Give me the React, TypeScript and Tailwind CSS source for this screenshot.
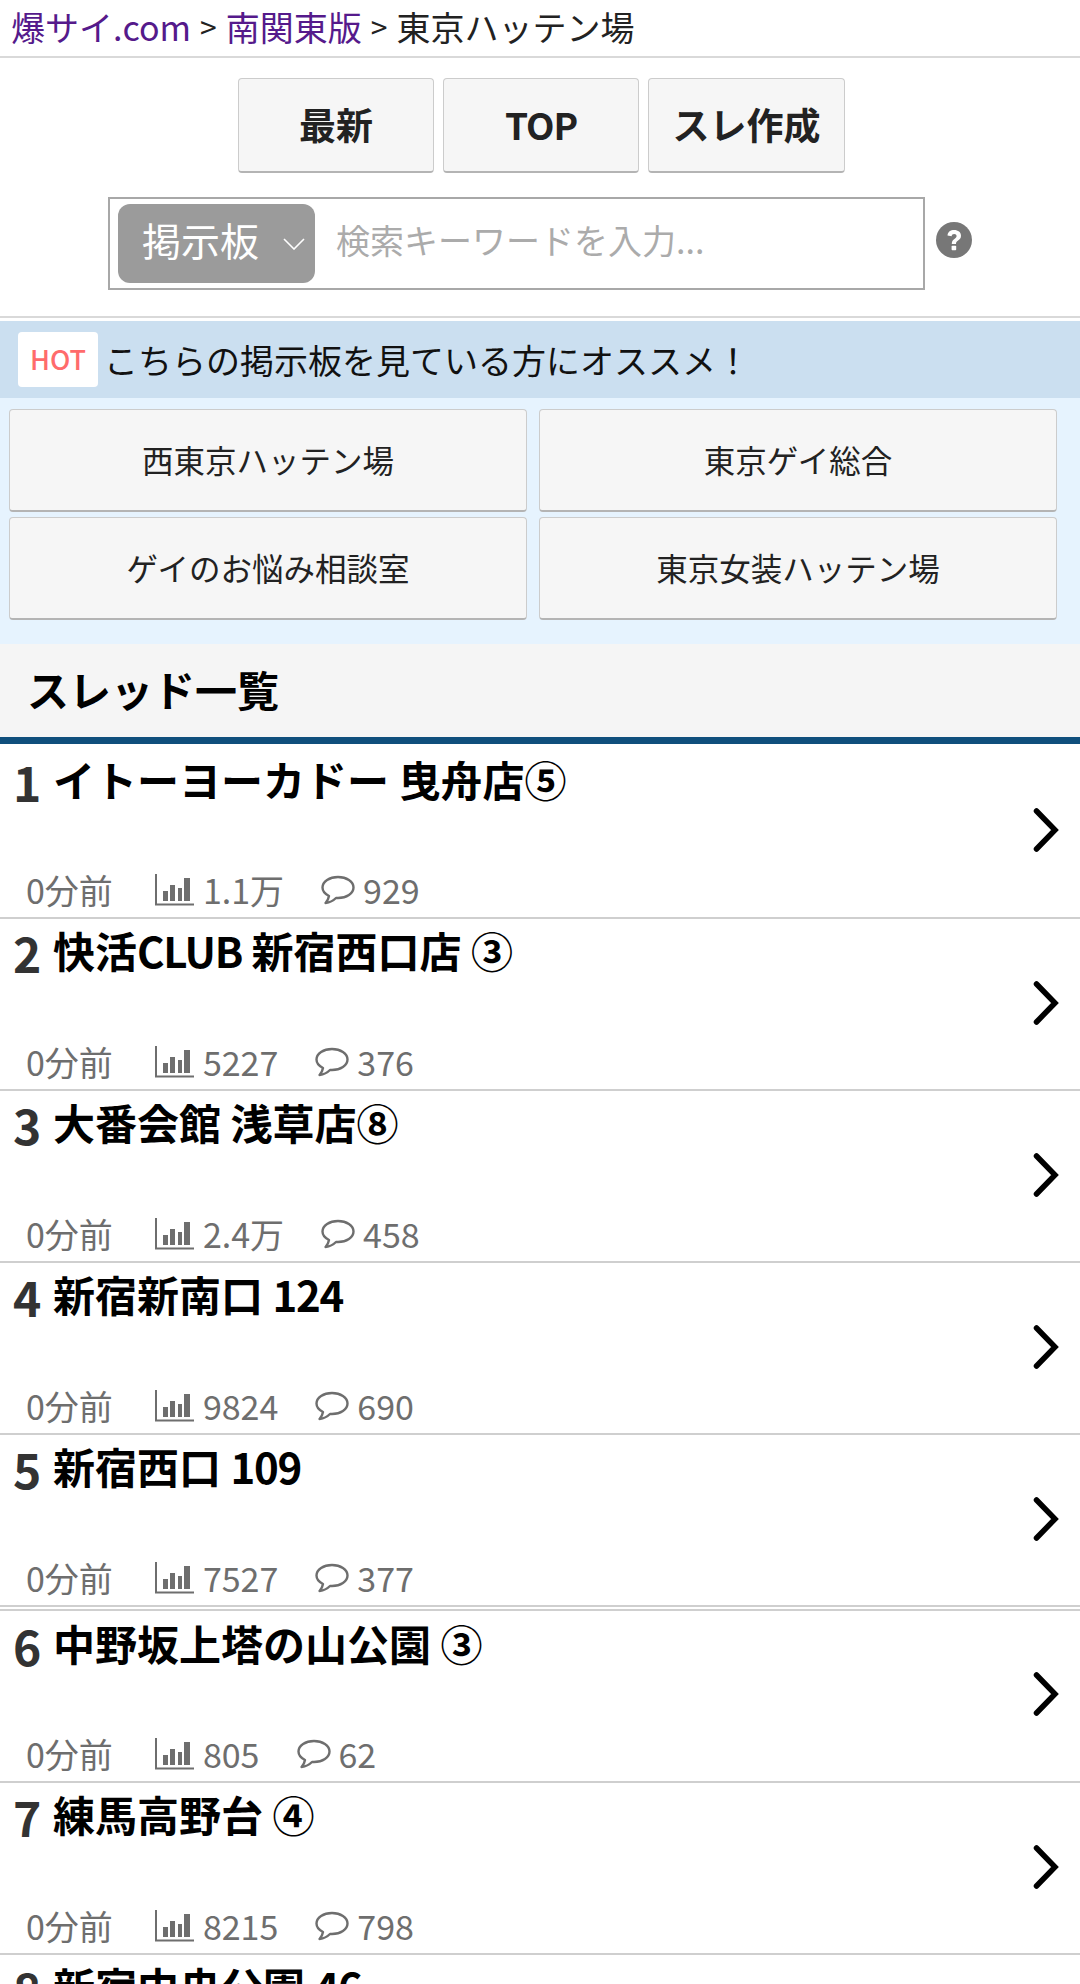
const threads = [
  { n: 1, title: "イトーヨーカドー 曳舟店⑤", views: "1.1万", res: "929", box: "h-[174px]", pt: "pt-[4px]", chev: "top-[62px]" },
  { n: 2, title: "快活CLUB 新宿西口店 ③", views: "5227", res: "376", box: "h-[172px]", pt: "pt-[1px]", chev: "top-[61px]" },
  { n: 3, title: "大番会館 浅草店⑧", views: "2.4万", res: "458", box: "h-[172px]", pt: "pt-[1px]", chev: "top-[61px]" },
  { n: 4, title: "新宿新南口 124", views: "9824", res: "690", box: "h-[172px]", pt: "pt-[1px]", chev: "top-[61px]" },
  { n: 5, title: "新宿西口 109", views: "7527", res: "377", box: "h-[172px]", pt: "pt-[1px]", chev: "top-[61px]" },
  { n: 6, title: "中野坂上塔の山公園 ③", views: "805", res: "62", box: "h-[174px] mt-[2px] border-t-2 border-t-[#cfcfcf]", pt: "pt-[2px]", chev: "top-[60px]" },
  { n: 7, title: "練馬高野台 ④", views: "8215", res: "798", box: "h-[172px]", pt: "pt-[1px]", chev: "top-[61px]" },
  { n: 8, title: "新宿中央公園 46", views: "", res: "", box: "h-[172px]", pt: "pt-[1px]", chev: "top-[61px]" },
];

function Bars() {
  return (
    <svg width="39" height="32" viewBox="0 0 39 32" className="shrink-0 mt-[2px]">
      <path d="M1 0V30.500H39" fill="none" stroke="#6e6e6e" strokeWidth="2" />
      <rect x="8" y="17" width="5" height="10" fill="#6e6e6e" />
      <rect x="15" y="11" width="5" height="16" fill="#6e6e6e" />
      <rect x="23" y="14" width="4" height="13" fill="#6e6e6e" />
      <rect x="29" y="4" width="6" height="23" fill="#6e6e6e" />
    </svg>
  );
}

function Bubble() {
  return (
    <svg width="34" height="30" viewBox="0 0 34 30" className="shrink-0 mt-[2px]">
      <path
        d="M17 2C8.500 2 1.500 6.500 1.500 12.500C1.500 16 4 19 8 21C7.500 24 6 26.500 4.500 28C8.500 27.500 12.500 25.500 15 23C15.700 23 16.300 23 17 23C25.500 23 32.500 18.500 32.500 12.500C32.500 6.500 25.500 2 17 2Z"
        fill="none"
        stroke="#6e6e6e"
        strokeWidth="2.400"
        strokeLinejoin="round"
      />
    </svg>
  );
}

function Title({ text }: { text: string }) {
  const parts = text.split(/([0-9A-Z]+)/);
  return (
    <span className="text-[42px] leading-[60px] font-bold text-black whitespace-nowrap">
      {parts.map((p, i) =>
        i % 2 === 1 ? (
          <span key={i} className="tracking-[-1.300px]">
            {p}
          </span>
        ) : (
          <span key={i}>{p}</span>
        ),
      )}
    </span>
  );
}

function Row({ t }: { t: (typeof threads)[number] }) {
  return (
    <div className={`relative ${t.box} shrink-0 border-b-2 border-b-[#cfcfcf]`}>
      <div className={`flex items-start pl-[13px] ${t.pt}`}>
        <span className="w-[40px] shrink-0 text-[48px] leading-[64px] font-bold text-[#333333] tracking-[-1px]">
          {t.n}
        </span>
        <Title text={t.title} />
      </div>
      {t.views && (
        <div className="absolute left-[26px] bottom-[3px] flex items-center h-[50px] text-[34px] text-[#6e6e6e]">
          <span>0分前</span>
          <span className="ml-[42px] flex items-center gap-[9px]">
            <Bars />
            {t.views}
          </span>
          <span className="ml-[37px] flex items-center gap-[8px]">
            <Bubble />
            {t.res}
          </span>
        </div>
      )}
      <svg width="28" height="46" viewBox="0 0 28 46" className={`absolute right-[19px] ${t.chev}`}>
        <path d="M3.500 4L22 23L3.500 42" fill="none" stroke="#000" strokeWidth="5.500" strokeLinecap="round" strokeLinejoin="miter" />
      </svg>
    </div>
  );
}

function GrayButton({ label, className }: { label: string; className: string }) {
  return (
    <div
      className={`flex items-center justify-center bg-[#f6f6f6] border border-[#cccccc] border-b-2 border-b-[#b4b4b4] rounded-[4px] text-[#222222] ${className}`}
    >
      {label}
    </div>
  );
}

export default function App() {
  return (
    <div className="w-[1080px] h-[1984px] overflow-hidden bg-white flex flex-col font-['Noto_Sans_CJK_JP','Noto_Sans',sans-serif]">
      <div className="h-[58px] shrink-0 border-b-2 border-[#d9d9d9] flex items-center pl-[11px] pb-[3px] text-[34px] text-[#222222] whitespace-nowrap">
        <span className="text-[#551a8b]">爆サイ.com</span>
        <span className="mx-[9px] text-[30px]">&gt;</span>
        <span className="text-[#551a8b]">南関東版</span>
        <span className="mx-[9px] text-[30px]">&gt;</span>
        <span>東京ハッテン場</span>
      </div>

      <div className="h-[260px] shrink-0 border-b-2 border-[#d9d9d9] flex flex-col">
        <div className="mt-[20px] flex justify-start pl-[238px] gap-[9px] font-bold text-[37px]">
          <GrayButton label="最新" className="w-[196px] h-[95px]" />
          <GrayButton label="TOP" className="w-[196px] h-[95px] tracking-[-1px]" />
          <GrayButton label="スレ作成" className="w-[197px] h-[95px]" />
        </div>
        <div className="mt-[24px] ml-[108px] flex items-center">
          <div className="w-[817px] h-[93px] border-2 border-[#a8a8a8] flex items-center pl-[8px]">
            <div className="relative w-[197px] h-[79px] rounded-[12px] bg-[#9b9b9b] flex items-center pl-[24px] pb-[8px] text-[39px] text-white">
              掲示板
              <svg width="22" height="12" viewBox="0 0 22 12" className="absolute right-[10px] top-[34px]">
                <path d="M1 1L11 11L21 1" fill="none" stroke="#fff" strokeWidth="1.600" />
              </svg>
            </div>
            <span className="ml-[21px] pb-[8px] text-[34px] text-[#ababab]">検索キーワードを入力...</span>
          </div>
          <svg width="38" height="38" viewBox="0 0 38 38" className="ml-[10px] mb-[8px]">
            <circle cx="19" cy="19" r="18" fill="#777777" />
            <path d="M12.500 14.500C12.800 10.800 15.500 9 19.200 9C23 9 26 11.200 26 14.700C26 17.300 24.600 18.500 22.800 19.700C21.300 20.700 21 21.300 21 23H16.800C16.800 20.400 17.500 19.200 19.400 17.900C20.800 17 21.600 16.300 21.600 15C21.600 13.600 20.600 12.900 19.200 12.900C17.700 12.900 16.800 13.800 16.600 15.200Z" fill="#fff" />
            <rect x="16.600" y="24.800" width="4.600" height="4.400" rx="0.800" fill="#fff" />
          </svg>
        </div>
      </div>

      <div className="h-[3px] shrink-0 bg-white" />
      <div className="h-[77px] shrink-0 bg-[#cbdff0] flex items-center pl-[18px]">
        <div className="w-[80px] h-[55px] bg-white rounded-[4px] flex items-center justify-center text-[27px] font-medium text-[#ff6b6b]">
          HOT
        </div>
        <span className="ml-[6px] text-[34px] text-[#111111]">こちらの掲示板を見ている方にオススメ！</span>
      </div>
      <div className="h-[246px] shrink-0 bg-[#e6f3fe] px-[9px] pt-[11px]">
        <div className="grid grid-cols-[518px_518px] gap-x-[12px] gap-y-[5px] text-[31.500px]">
          <GrayButton label="西東京ハッテン場" className="h-[103px]" />
          <GrayButton label="東京ゲイ総合" className="h-[103px]" />
          <GrayButton label="ゲイのお悩み相談室" className="h-[103px]" />
          <GrayButton label="東京女装ハッテン場" className="h-[103px]" />
        </div>
      </div>

      <div className="h-[93px] shrink-0 bg-[#f5f5f5] flex items-center pl-[27px] pb-[4px] text-[42px] font-bold text-black">
        スレッド一覧
      </div>
      <div className="h-[7px] shrink-0 bg-[#0f4f7c]" />

      <div className="h-[1px] shrink-0" />
      {threads.map((t) => (
        <Row key={t.n} t={t} />
      ))}
    </div>
  );
}
